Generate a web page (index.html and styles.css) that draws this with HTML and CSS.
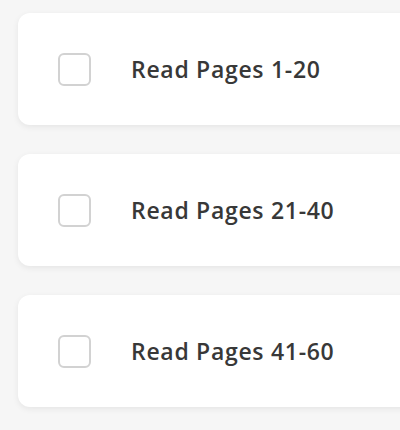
FILE: index.html
```html
<!DOCTYPE html>
<html>
<head>
<meta charset="utf-8">
<link rel="stylesheet" href="styles.css">
</head>
<body>
<div class="list">
  <div class="card"><span class="box"></span><span class="label">Read Pages 1-20</span></div>
  <div class="card"><span class="box"></span><span class="label">Read Pages 21-40</span></div>
  <div class="card"><span class="box"></span><span class="label">Read Pages 41-60</span></div>
</div>
</body>
</html>
```
FILE: styles.css
```css
html, body {
  margin: 0;
  padding: 0;
  background: #f6f6f6;
  overflow: hidden;
}
body {
  width: 400px;
  height: 430px;
}
.list {
  display: flex;
  flex-direction: column;
  gap: 29px;
  padding: 13px 0 20px 18px;
  overflow: hidden;
}
.card {
  width: calc(100% + 20px);
  height: 112px;
  box-sizing: border-box;
  background: #fff;
  border-radius: 12px;
  box-shadow: 0 2px 6px rgba(0,0,0,0.07);
  display: flex;
  align-items: center;
  padding-left: 40px;
  gap: 40px;
  flex: none;
}
.box {
  width: 29px;
  height: 29px;
  border: 2px solid #d2d2d2;
  border-radius: 6px;
  flex: none;
}
.label {
  font-family: "Open Sans", sans-serif;
  font-weight: 600;
  font-size: 23px;
  letter-spacing: 0.7px;
  color: #383838;
}
```
